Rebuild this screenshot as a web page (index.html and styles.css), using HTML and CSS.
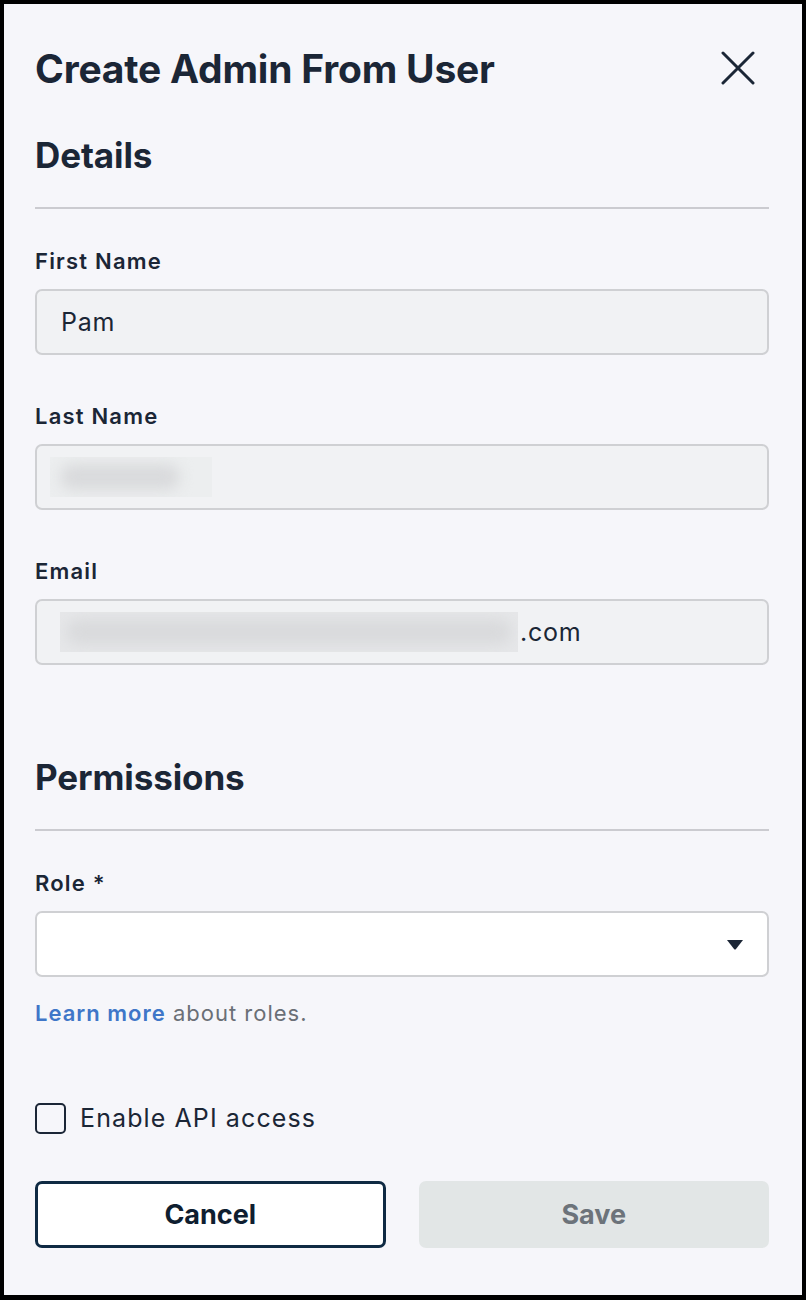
FILE: index.html
```html
<!DOCTYPE html>
<html>
<head>
<meta charset="utf-8">
<link rel="stylesheet" href="styles.css">
</head>
<body>
<div class="panel">
  <header class="head">
    <h1 class="title">Create Admin From User</h1>
    <button class="close" aria-label="Close">
      <svg width="34" height="34" viewBox="0 0 34 34"><path d="M2 2 L32 32 M32 2 L2 32" stroke="#1b2636" stroke-width="3" stroke-linecap="round" fill="none"/></svg>
    </button>
  </header>

  <section class="section">
    <h2 class="section-title">Details</h2>
    <div class="rule"></div>
    <div class="field">
      <label class="label">First Name</label>
      <div class="input">Pam</div>
    </div>
    <div class="field">
      <label class="label">Last Name</label>
      <div class="input"><span class="redact redact-short"><span class="blur"></span></span></div>
    </div>
    <div class="field">
      <label class="label">Email</label>
      <div class="input"><span class="redact redact-long"><span class="blur"></span></span><span class="tail">.com</span></div>
    </div>
  </section>

  <section class="section perms">
    <h2 class="section-title">Permissions</h2>
    <div class="rule"></div>
    <div class="field">
      <label class="label">Role *</label>
      <div class="select">
        <svg class="caret" width="18" height="11" viewBox="0 0 18 11"><path d="M1 1 H17 L10 10 Q9 11 8 10 Z" fill="#1b2636"/></svg>
      </div>
      <p class="help"><a class="link" href="#">Learn more</a> about roles.</p>
    </div>
  </section>

  <label class="check">
    <span class="box"></span>
    <span class="check-text">Enable API access</span>
  </label>

  <div class="actions">
    <button class="btn btn-cancel">Cancel</button>
    <button class="btn btn-save">Save</button>
  </div>
</div>
</body>
</html>
```

FILE: styles.css
```css
* { box-sizing: border-box; }
html, body { margin: 0; padding: 0; }
body {
  width: 806px;
  height: 1300px;
  font-family: Inter, "Noto Sans", sans-serif;
  color: #1b2636;
  background: #000;
}
.panel {
  width: 806px;
  height: 1300px;
  border: 4px solid #000;
  border-bottom-width: 5px;
  background: #f6f6fa;
  padding: 35px 33px 0 31px;
}
.head {
  display: flex;
  justify-content: space-between;
  align-items: center;
  height: 60px;
}
.title {
  margin: 0;
  font-size: 39px;
  line-height: 50px;
  font-weight: 700;
  letter-spacing: -0.2px;
  color: #1b2636;
}
.close {
  border: 0;
  background: none;
  padding: 0;
  width: 34px;
  height: 34px;
  margin-right: 14px;
  margin-top: -2px;
  display: flex;
}
.section { margin-top: 34px; }
.section-title {
  margin: 0;
  font-size: 35px;
  font-weight: 700;
  line-height: 44px;
  letter-spacing: -0.1px;
  color: #1b2636;
}
.rule {
  height: 2px;
  background: #cbcbd0;
  margin-top: 30px;
}
.field { margin-top: 37px; }
.field + .field { margin-top: 46px; }
.label {
  display: block;
  font-size: 22px;
  font-weight: 600;
  line-height: 30px;
  letter-spacing: 1.2px;
  color: #1b2636;
}
.input {
  margin-top: 13px;
  height: 66px;
  border: 2px solid #cfd0d3;
  border-radius: 7px;
  background: #f1f2f4;
  display: flex;
  align-items: center;
  padding: 0 24px;
  font-size: 25px;
  letter-spacing: 0.8px;
  color: #1b2636;
}
.redact {
  display: flex;
  align-items: center;
  height: 40px;
  background: #eceeef;
  overflow: hidden;
}
.redact-short { width: 162px; margin-left: -11px; padding-left: 10px; }
.redact-long { width: 458px; margin-left: -1px; padding: 0 6px; background: #e6e7e9; }
.blur {
  display: block;
  height: 26px;
  width: 100%;
  background: #d9dadc;
  filter: blur(7px);
  border-radius: 13px;
}
.redact-short .blur { width: 120px; }
.tail { margin-left: 2px; }
.perms { margin-top: 90px; }
.select {
  margin-top: 13px;
  height: 66px;
  border: 2px solid #cfd0d3;
  border-radius: 7px;
  background: #fff;
  display: flex;
  align-items: center;
  justify-content: flex-end;
  padding-right: 23px;
}
.help {
  margin: 21px 0 0;
  font-size: 22px;
  line-height: 30px;
  letter-spacing: 1px;
  color: #6a6f76;
}
.link {
  color: #3f76c8;
  font-weight: 600;
  text-decoration: none;
}
.check {
  display: flex;
  align-items: center;
  height: 36px;
  margin-top: 72px;
  gap: 14px;
}
.box {
  width: 31px;
  height: 31px;
  border: 2px solid #1b2636;
  border-radius: 5px;
  background: #f6f6fa;
}
.check-text {
  font-size: 25px;
  letter-spacing: 1.1px;
  color: #1b2636;
}
.actions {
  display: grid;
  grid-template-columns: 1fr 1fr;
  gap: 33px;
  margin-top: 45px;
}
.btn {
  height: 67px;
  border-radius: 7px;
  font-family: Inter, "Noto Sans", sans-serif;
  font-size: 27px;
  font-weight: 700;
}
.btn-cancel {
  background: #fff;
  border: 3px solid #0f2a43;
  color: #0f1e30;
}
.btn-save {
  background: #e2e6e6;
  border: 0;
  color: #6c737a;
}
```
